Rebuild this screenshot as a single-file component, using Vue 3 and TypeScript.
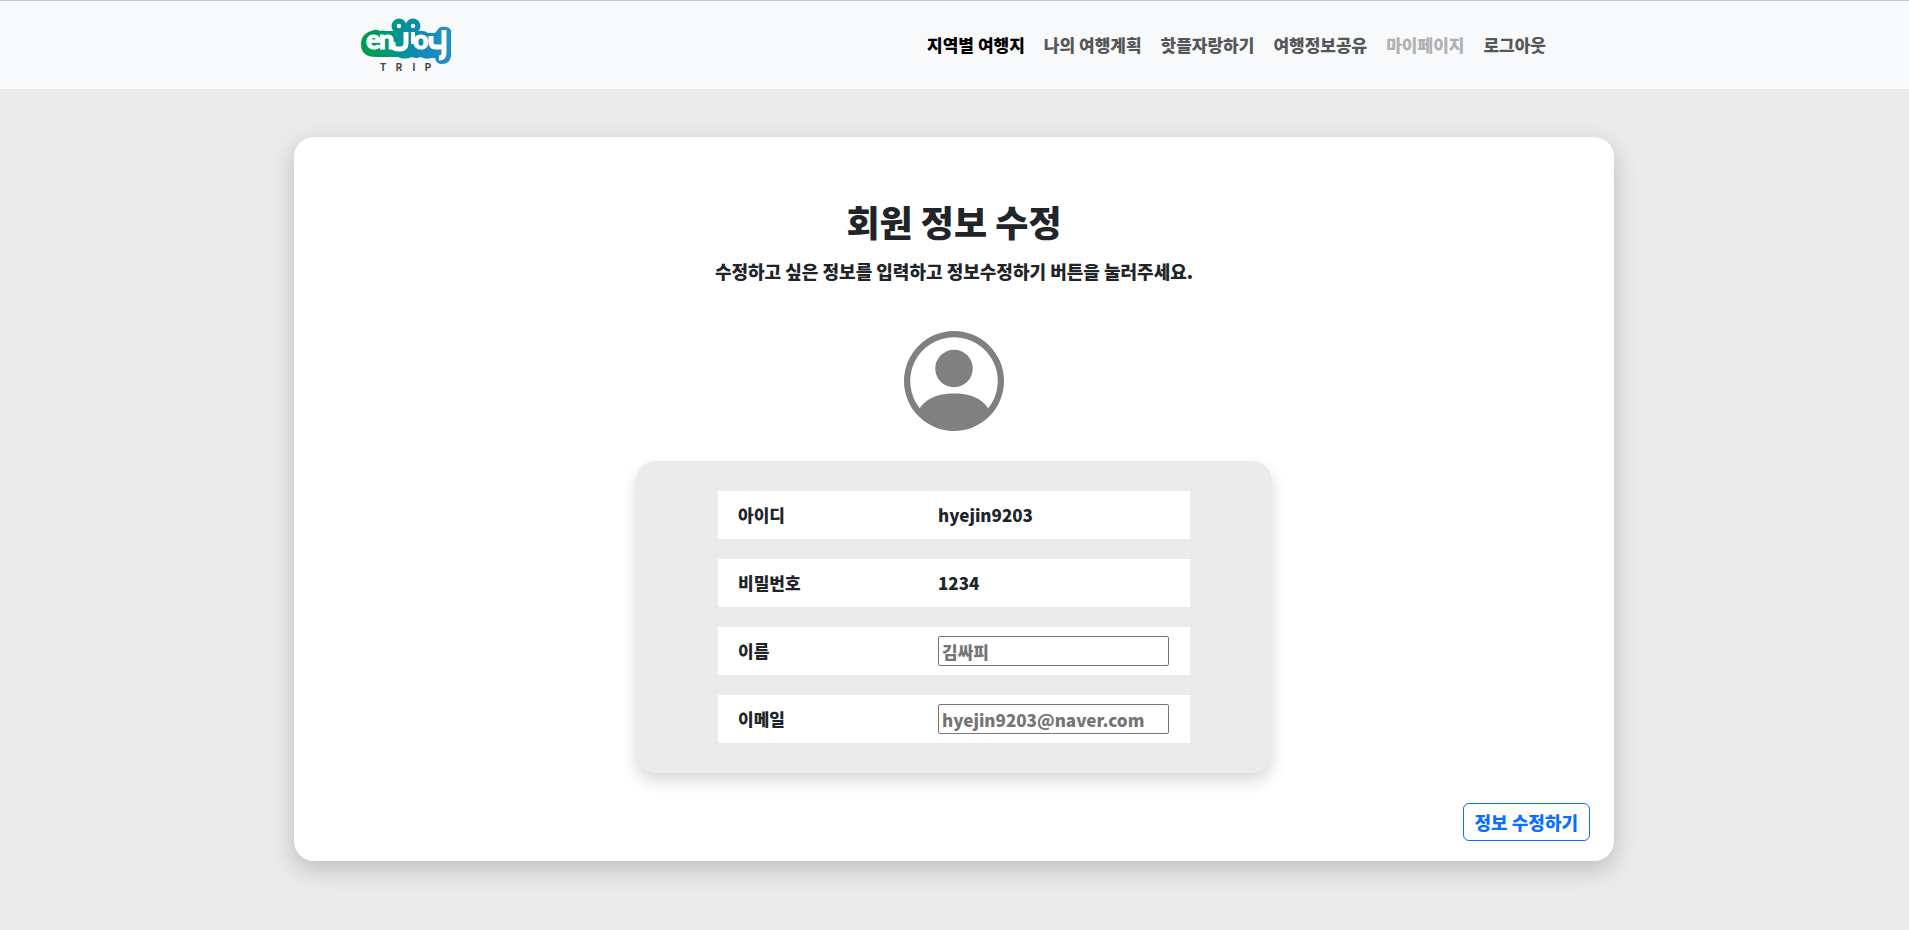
<script setup lang="ts">
import { ref } from 'vue'

interface NavItem {
  label: string
  state?: 'active' | 'muted'
}

const navItems: NavItem[] = [
  { label: '지역별 여행지', state: 'active' },
  { label: '나의 여행계획' },
  { label: '핫플자랑하기' },
  { label: '여행정보공유' },
  { label: '마이페이지', state: 'muted' },
  { label: '로그아웃' },
]

const user = { id: 'hyejin9203', password: '1234', name: '김싸피', email: 'hyejin9203@naver.com' }
const name = ref('')
const email = ref('')
</script>

<template>
  <div class="page">
    <header class="navbar">
      <div class="navbar-inner">
        <a class="brand" href="#" aria-label="enjoy trip">
          <svg width="92" height="58" viewBox="20 16 92 58" aria-hidden="true">
            <defs>
              <linearGradient id="brand-fill" gradientUnits="userSpaceOnUse" x1="20" y1="0" x2="112" y2="0">
                <stop offset="0" stop-color="#009a4a" />
                <stop offset="0.15" stop-color="#009b55" />
                <stop offset="0.4" stop-color="#00958f" />
                <stop offset="0.65" stop-color="#1189b4" />
                <stop offset="1" stop-color="#2590cf" />
              </linearGradient>
            </defs>
            <g fill="url(#brand-fill)">
              <circle cx="59" cy="26" r="7.5" />
              <circle cx="73" cy="26" r="7.5" />
              <path d="M54 28h24v12H54z" />
              <path
                d="M34 30q3-1 6 1 3-1 5 0l9 0 3-3h18l3 3q6-1 10 2l7 0 4-5q3-2 7-1 6 1 5 6v23q-1 8-9 8-6 0-7-6l-4 0q-6 2-10-1-5 2-9 0-8 3-14 0H36q-15 0-15-13 0-11 13-14z"
              />
            </g>
            <g class="wordmark">
              <text x="26" y="49">e</text>
              <text x="39" y="49">n</text>
              <text x="73" y="49">o</text>
            </g>
            <path d="M53 42v3q0 4 5 4h2q6 0 6-6V32" fill="none" stroke="#fff" stroke-width="5" />
            <path d="M73 32v12" fill="none" stroke="#fff" stroke-width="4" />
            <path
              d="M91 36v6q0 5 5 5h7M104 30v23q0 5-5 5"
              fill="none"
              stroke="#fff"
              stroke-width="5"
              stroke-linejoin="round"
            />
            <circle cx="59" cy="26" r="2.2" fill="#fff" />
            <circle cx="73" cy="26" r="2.2" fill="#fff" />
            <g class="tagline">
              <text x="43" y="71">T</text>
              <text x="59" y="71">R</text>
              <text x="74" y="71">I</text>
              <text x="88" y="71">P</text>
            </g>
          </svg>
        </a>
        <nav class="nav">
          <a v-for="item in navItems" :key="item.label" href="#" :class="['nav-link', item.state]">{{ item.label }}</a>
        </nav>
      </div>
    </header>

    <div class="content">
      <main class="card">
        <h1>회원 정보 수정</h1>
        <p class="lead">수정하고 싶은 정보를 입력하고 정보수정하기 버튼을 눌러주세요.</p>
        <svg class="avatar" viewBox="0 0 16 16" aria-hidden="true">
          <path d="M11 6a3 3 0 1 1-6 0 3 3 0 0 1 6 0z" />
          <path
            fill-rule="evenodd"
            d="M0 8a8 8 0 1 1 16 0A8 8 0 0 1 0 8zm8-7a7 7 0 0 0-5.468 11.37C3.242 11.226 4.805 10 8 10s4.757 1.225 5.468 2.37A7 7 0 0 0 8 1z"
          />
        </svg>
        <form class="form" @submit.prevent>
          <div class="panel">
            <div class="row">
              <span>아이디</span>
              <span>{{ user.id }}</span>
            </div>
            <div class="row">
              <span>비밀번호</span>
              <span>{{ user.password }}</span>
            </div>
            <div class="row">
              <label for="name">이름</label>
              <input id="name" v-model="name" type="text" :placeholder="user.name" />
            </div>
            <div class="row">
              <label for="email">이메일</label>
              <input id="email" v-model="email" type="text" :placeholder="user.email" />
            </div>
          </div>
          <button class="submit" type="submit">정보 수정하기</button>
        </form>
      </main>
    </div>
  </div>
</template>

<style>
body {
  margin: 0;
  background: #ebebeb;
}
</style>

<style scoped>
.page,
.page * {
  box-sizing: border-box;
}

.page {
  min-height: 100vh;
  background: #ebebeb;
  color: #212529;
  font-family: 'Noto Sans CJK KR', sans-serif;
  font-size: 17px;
  font-weight: 900;
  line-height: 24px;
}

.navbar {
  padding-right: 1px;
  border-top: 1px solid #c8cacc;
  background: #f8f9fb;
}

.navbar-inner {
  display: flex;
  align-items: center;
  justify-content: space-between;
  max-width: 1188px;
  height: 88px;
  margin: 0 auto;
}

.brand {
  display: flex;
}

.wordmark {
  fill: #fff;
  stroke: #fff;
  stroke-width: 1px;
  font-family: Lato, sans-serif;
  font-size: 27px;
  font-weight: 900;
}

.tagline {
  fill: #444;
  text-anchor: middle;
  font-family: Roboto, sans-serif;
  font-size: 10px;
  font-weight: 700;
}

.nav {
  display: flex;
  gap: 19px;
  padding-right: 2px;
}

.nav-link {
  color: #565758;
  text-decoration: none;
}

.nav-link.active {
  color: #000;
}

.nav-link.muted {
  color: #b0b1b2;
}

.content {
  padding: 48px 1px 48px 0;
}

.card {
  display: flex;
  flex-direction: column;
  align-items: center;
  max-width: 1320px;
  margin: 0 auto;
  padding: 60px 24px 20px;
  border-radius: 20px;
  background: #fff;
  box-shadow: 0 8px 24px rgba(0, 0, 0, 0.2);
}

h1 {
  margin: 0;
  font-size: 36px;
  font-weight: 900;
  line-height: 48px;
}

.lead {
  margin: 14px 0 48px;
  font-size: 18px;
}

.avatar {
  width: 100px;
  height: 100px;
  fill: #808080;
}

.form {
  display: flex;
  flex-direction: column;
  align-items: center;
  width: 100%;
  margin-top: 30px;
}

.panel {
  display: flex;
  flex-direction: column;
  gap: 20px;
  width: 100%;
  max-width: 636px;
  padding: 30px 82px;
  border-radius: 20px;
  background: #ebebeb;
  box-shadow: 0 8px 16px rgba(0, 0, 0, 0.15);
}

.row {
  display: grid;
  grid-template-columns: 200px 1fr;
  align-items: center;
  height: 48px;
  padding: 0 21px 0 20px;
  background: #fff;
}

input {
  width: 100%;
  height: 30px;
  padding: 1px 3px;
  border: 1px solid #767676;
  border-radius: 2px;
  background: #fff;
  color: #212529;
  font: inherit;
}

input::placeholder {
  color: #757575;
  opacity: 1;
}

.submit {
  align-self: flex-end;
  height: 38px;
  margin-top: 30px;
  padding: 0 11px;
  border: 1px solid #0d6efd;
  border-radius: 6px;
  background: #fff;
  color: #0d6efd;
  font: inherit;
  font-size: 18px;
}
</style>
